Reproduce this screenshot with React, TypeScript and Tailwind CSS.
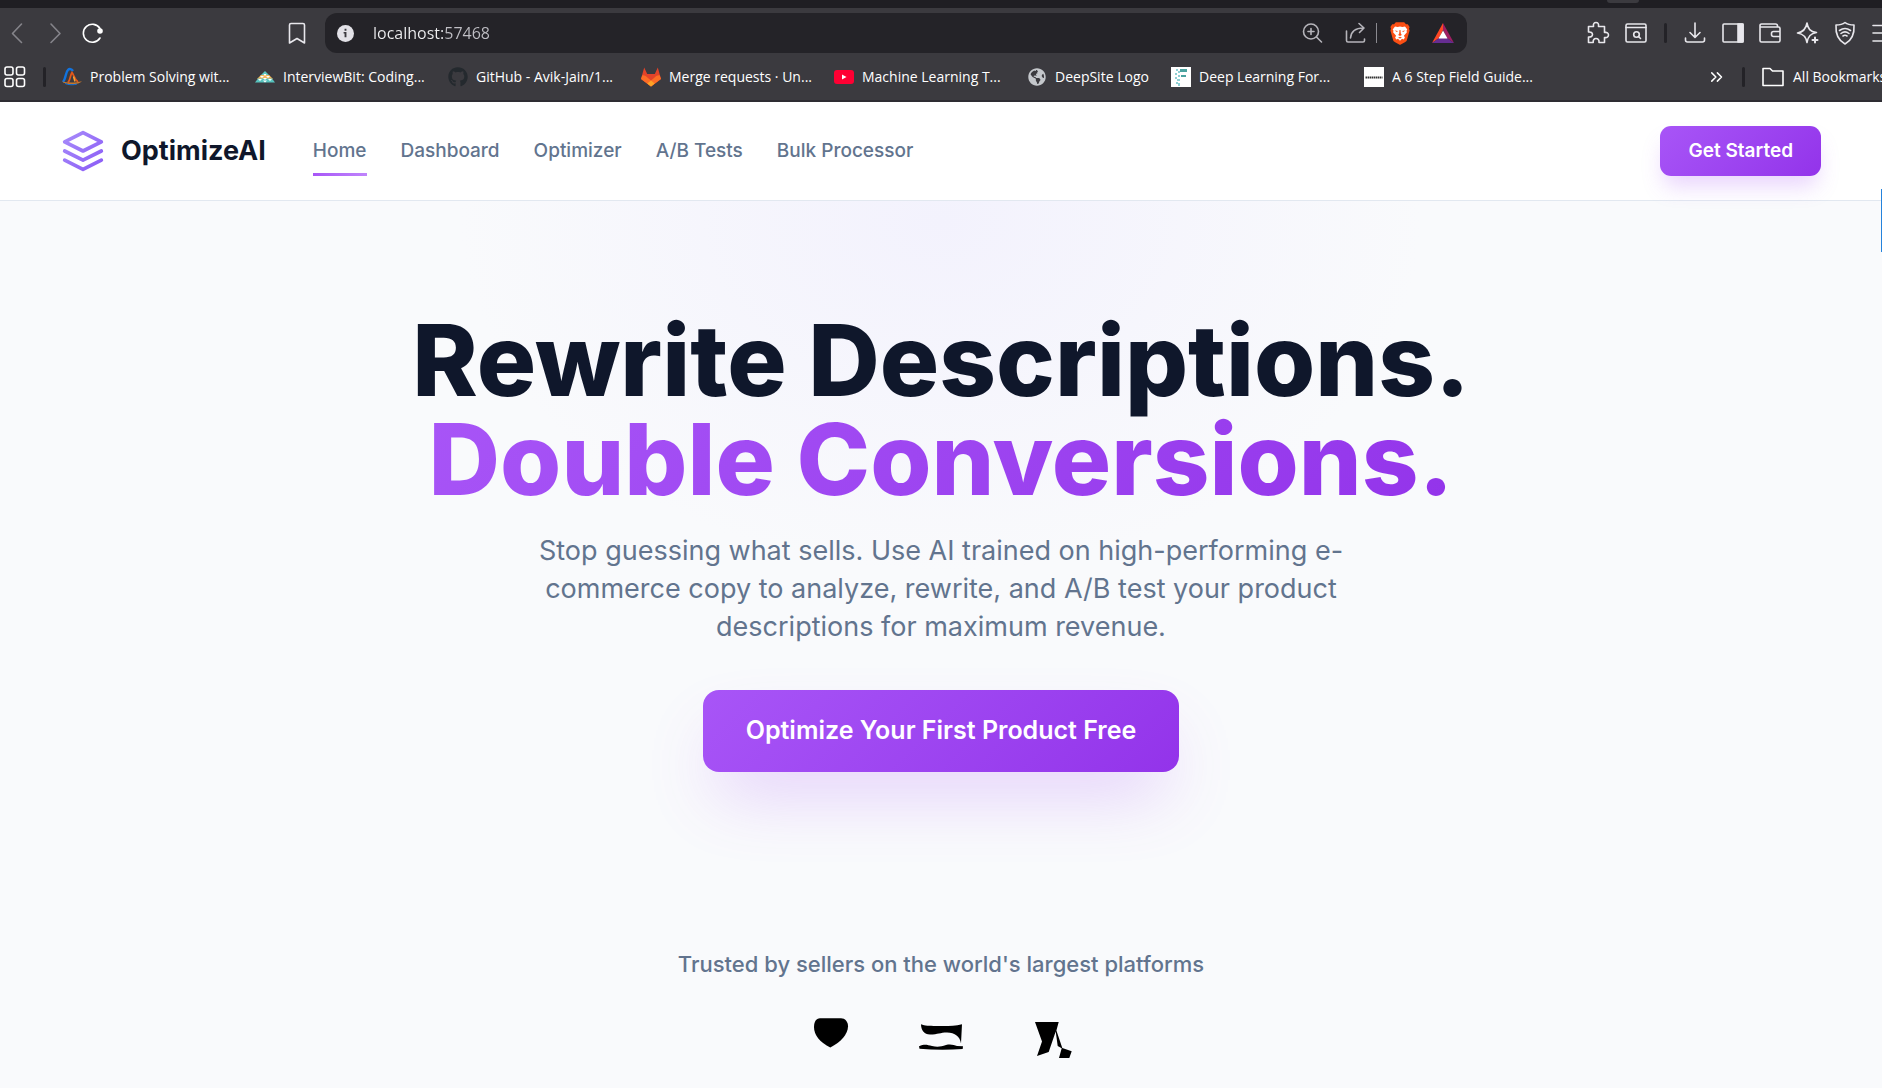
import type { ReactNode } from "react";
import { FaGithub, FaGlobeAmericas } from "react-icons/fa";

function Icon({ children, className = "size-6" }: { children: ReactNode; className?: string }) {
  return (
    <svg
      viewBox="0 0 24 24"
      className={`shrink-0 ${className}`}
      fill="none"
      stroke="currentColor"
      strokeWidth="1.6"
      strokeLinecap="round"
      strokeLinejoin="round"
      aria-hidden="true"
    >
      {children}
    </svg>
  );
}

function ToolButton({ label, children }: { label: string; children: ReactNode }) {
  return (
    <button type="button" aria-label={label} className="shrink-0">
      {children}
    </button>
  );
}

function Separator() {
  return <span className="mx-4 h-5 w-[3px] shrink-0 rounded-full bg-[#232227]" />;
}

const bookmarks = [
  {
    title: "Problem Solving wit...",
    width: "w-[193px]",
    icon: (
      <svg viewBox="0 0 20 20" className="size-5 shrink-0" fill="none">
        <path d="M1 15C4 12 3.500 5 6 2.800 7.500 1.500 9.500 2 11 4" stroke="#1273de" strokeWidth="2.400" />
        <path d="M6 15.500C8.500 13 8 8.500 10 5.500c2 2.500 2.500 7 6 9.500" stroke="#e2571b" strokeWidth="1.800" />
        <path d="M11.500 9.500l1.500 5" stroke="#f3a53a" strokeWidth="1.500" />
        <path d="M0 14.500c6 1.500 14 1.300 20-.3-2 2-5 2.800-10 2.800s-8-.5-10-2.500z" fill="#c7772b" />
        <path d="M3 16.500c3 1.500 9 1.700 12 .5" stroke="#1273de" />
      </svg>
    ),
  },
  {
    title: "InterviewBit: Coding...",
    width: "w-[193px]",
    icon: (
      <svg viewBox="0 0 20 20" className="size-5 shrink-0">
        <path d="M10 4l5 5H5z" fill="#5cc5c0" />
        <path d="M6 8h8l4 4H2z" fill="#f5b75c" />
        <path d="M3 11.500h14l3 4H0z" fill="#58c4bf" />
        <path
          d="M8.500 7l1.500 2 1.500-2zM5 9l2 2 2-2zM11 9l2 2 2-2zM8 11l2 2 2-2zM3 12l2 2 2-2zM8 13.500l2 2 2-2zM13 12l2 2 2-2z"
          fill="#fff"
        />
      </svg>
    ),
  },
  {
    title: "GitHub - Avik-Jain/1...",
    width: "w-[193px]",
    icon: <FaGithub className="size-5 shrink-0 text-[#24292e]" />,
  },
  {
    title: "Merge requests · Un...",
    width: "w-[193px]",
    icon: (
      <svg viewBox="0 0 20 20" className="size-5 shrink-0">
        <path d="M10 19.500L0 12 3.200.5 6.200 7h7.600l3-6.500L20 12z" fill="#e24329" />
        <path d="M10 19.500L0 12l1.200-3.500C3 7.800 5.500 9.500 7 11l3 2.500 3-2.500c1.500-1.500 4-3.200 5.800-2.500L20 12z" fill="#fc6d26" />
        <path d="M10 19.500L6.300 16.500 10 13.600l3.700 2.900z" fill="#fca326" />
      </svg>
    ),
  },
  {
    title: "Machine Learning T...",
    width: "w-[193px]",
    icon: (
      <svg viewBox="0 0 20 20" className="size-5 shrink-0">
        <rect y="3" width="20" height="14" rx="3" fill="#ff0033" />
        <path d="M8 7.500v5l4.500-2.500z" fill="#fff" />
      </svg>
    ),
  },
  {
    title: "DeepSite Logo",
    width: "w-[144px]",
    icon: <FaGlobeAmericas className="size-5 shrink-0 p-px text-[#c4c7cb]" />,
  },
  {
    title: "Deep Learning For...",
    width: "w-[193px]",
    icon: (
      <svg viewBox="0 0 20 20" className="size-5 shrink-0">
        <path d="M0 0h20v20H0z" fill="#fff" />
        <path d="M9 2h7v3H9zM10 8h5v2h-5z" fill="#4ba3a0" />
        <path d="M5 2h2v2H5zM7 4h2v2H7zM4 6h2v2H4zM7 8h2v2H7zM4 10h2v2H4zM6 12h3v2H6zM5 15h2v2H5zM7 16h2v3H7z" fill="#8fd0d4" />
      </svg>
    ),
  },
  {
    title: "A 6 Step Field Guide...",
    width: "w-[193px]",
    icon: (
      <svg viewBox="0 0 20 20" className="size-5 shrink-0">
        <path d="M0 0h20v20H0z" fill="#fff" />
        <path d="M1.500 10.500h17" stroke="#333" strokeWidth="2" strokeDasharray="1.500 .5" />
      </svg>
    ),
  },
];

function AddressBar() {
  return (
    <div className="flex h-10 min-w-0 flex-1 items-center rounded-xl bg-[#242328] px-3">
      <svg viewBox="0 0 18 18" className="size-[17px] shrink-0" aria-hidden="true">
        <circle cx="9" cy="9" r="9" fill="#e3e2e8" />
        <path d="M8 4h2v2H8zM7 7.500h3V13H8V9H7z" fill="#3b3a3f" />
      </svg>
      <input
        aria-label="Address"
        defaultValue="localhost:57468"
        className="ml-[19px] min-w-0 flex-1 bg-[linear-gradient(to_right,#f0f0f2_70px,#c0bfc5_70px)] bg-clip-text text-base text-transparent outline-none"
      />
      <div className="flex items-center text-[#b5b4ba]">
        <ToolButton label="Zoom">
          <Icon>
            <circle cx="11" cy="10.500" r="7.500" />
            <path d="M16.500 16l5 5M11 7.500v6M8 10.500h6" />
          </Icon>
        </ToolButton>
        <span className="w-5" />
        <ToolButton label="Share">
          <Icon>
            <path d="M2.500 10v9.500a1.500 1.500 0 001.500 1.500h15a1.500 1.500 0 001.500-1.500V18" />
            <path d="M6.500 17c.5-6 4-10 13-10M15 2.500L20 7l-4.500 4.500" />
          </Icon>
        </ToolButton>
        <span className="mx-2 h-5 w-px bg-[#8b8a90]" />
      </div>
      <div className="flex items-center gap-5 pl-1">
        <ToolButton label="Brave Shields">
          <svg viewBox="0 0 20 23" className="h-[23px] w-[22px]">
            <path
              d="M5.800.3h8.400l1.800 2h1.800L19.600 5l-.6 1.800.6 1.700-2.700 9.500c-.3 1-.8 1.500-1.600 2L10.800 22.500c-.6.400-1 .4-1.600 0L4.700 20c-.8-.5-1.300-1-1.600-2L.4 8.500 1 6.800.4 5l1.800-2.700H4z"
              fill="#fb4f14"
            />
            <path
              d="M5 4.500l2.700.5 2.300-.5 2.300.5 2.700-.5 2.300 3-.8 1.300.4 1.400-3 3.600 1 1.700-1.200 2-1.700-.8L10 18.800l-2-2.100-1.700.8-1.200-2 1-1.700-3-3.600.4-1.400L2.700 7.500z"
              fill="#fff"
            />
            <path d="M4.500 8.500l3.300.4L7 10zM15.500 8.500l-3.300.4.8 1.100zM9.500 8h1l.3 3.500 1 1.500-1.800 1-1.800-1 1-1.500zM8 15.700l2-.9 2 .9-2 .8z" fill="#fb4f14" />
          </svg>
        </ToolButton>
        <ToolButton label="Brave Rewards">
          <svg viewBox="0 0 24 22" className="h-[22px] w-6">
            <path d="M12 1L1 21l7-5 4-8z" fill="#ff4724" />
            <path d="M12 1l11 20-7-5-4-8z" fill="#9e1f63" />
            <path d="M1 21h22l-7-5H8z" fill="#662d91" />
            <path d="M12 8.500l4.500 8h-9z" fill="#fff" />
          </svg>
        </ToolButton>
      </div>
    </div>
  );
}

function BrowserChrome() {
  return (
    <div className="overflow-hidden border-b-2 border-[#2e2d33] bg-[#3b3a3f] font-['Open_Sans',sans-serif] text-[#e8e7ec]">
      <div className="flex h-2 justify-end bg-[#1f1e23] pr-[243px]">
        <span className="h-[3px] w-8 rounded-b bg-[#3b3a3f]" />
      </div>
      <div className="flex h-[50px] items-center">
        <div className="flex w-[325px] shrink-0 items-center gap-[14px] pr-4 pl-1">
          <ToolButton label="Back">
            <Icon className="size-6 text-[#85848a]">
              <path d="M17.500 3l-9 9.500 9 9" />
            </Icon>
          </ToolButton>
          <ToolButton label="Forward">
            <Icon className="size-6 text-[#85848a]">
              <path d="M9 3l9 9.500-9 9" />
            </Icon>
          </ToolButton>
          <ToolButton label="Reload">
            <Icon className="size-6 text-white">
              <path d="M20 7.500A9 9 0 1 0 20 17" />
              <circle cx="20" cy="10" r="2" fill="currentColor" />
            </Icon>
          </ToolButton>
          <span className="flex-1" />
          <ToolButton label="Bookmark this page">
            <Icon>
              <path d="M4.500 22V4a1.500 1.500 0 011.500-1.500h12A1.500 1.500 0 0119.500 4v18L12 17.500z" />
            </Icon>
          </ToolButton>
        </div>
        <AddressBar />
        <div className="flex w-[415px] shrink-0 items-center pl-[119px]">
          <ToolButton label="Extensions">
            <Icon>
              <path d="M2.500 5.500h5c-.5-3 .8-4 2.500-4s3 1 2.500 4h6v6c2.500-.5 4 .8 4 2.500s-1.500 3-4 2.500v5H13c.3-2.500-1-4-3-4s-3 1.500-2.800 4H2.500v-5.500c2.500.2 4-.8 4-2.500s-1.500-2.800-4-2.500z" />
            </Icon>
          </ToolButton>
          <span className="w-[14px] shrink-0" />
          <ToolButton label="Search tabs">
            <Icon>
              <rect x="2" y="3" width="20" height="18" rx="1.500" />
              <path d="M2 6.500h20M14.500 15.500l2 2" />
              <circle cx="12.500" cy="13.500" r="2.800" />
            </Icon>
          </ToolButton>
          <Separator />
          <div className="flex w-[212px] shrink-0 justify-between">
            <ToolButton label="Downloads">
              <Icon>
                <path d="M12 2v14M7 11.500l5 5 5-5M2.500 17v2a2 2 0 002 2h15a2 2 0 002-2v-2" />
              </Icon>
            </ToolButton>
            <ToolButton label="Sidebar">
              <Icon>
                <rect x="2" y="3" width="20" height="18" rx="1" />
                <path d="M17 3h5v18h-5z" fill="currentColor" />
              </Icon>
            </ToolButton>
            <ToolButton label="Wallet">
              <Icon>
                <path d="M19.500 6V5A2 2 0 0017.500 3H3.500A1.500 1.500 0 002 4.500V19.500A1.500 1.500 0 003.500 21h17a1.500 1.500 0 001.500-1.500v-12A1.500 1.500 0 0020.500 6H2.500M22 10.500h-6.500a2 2 0 00-2 2v1a2 2 0 002 2H22" />
              </Icon>
            </ToolButton>
            <ToolButton label="Leo AI">
              <Icon>
                <path d="M11 2c1 6 3 8.500 9.500 9.500-3 .6-5 1.500-6.500 3-1.400 1.400-2.300 3.500-3 7C10 15.500 7.500 13 1.500 12 7.500 11 10 8 11 2z" />
                <path d="M19 16.500v5M16.500 19h5" strokeWidth="2" />
              </Icon>
            </ToolButton>
            <ToolButton label="VPN">
              <Icon>
                <path d="M12 1.500c2.500 2 5.500 2.500 9 2.500.6 9-1.500 15-9 19C4.500 19 2.400 13 3 4c3.500 0 6.500-.5 9-2.500z" />
                <path d="M6.500 9.500c3.500-2.500 7.500-2.500 11 0M8 12.500c2.500-2 5.500-2 8 0M10 15c1.300-.9 2.700-.9 4 0" />
              </Icon>
            </ToolButton>
            <ToolButton label="Menu">
              <Icon>
                <path d="M2 4.500h20M2 12h20M2 20h20" />
              </Icon>
            </ToolButton>
          </div>
        </div>
      </div>
      <div className="flex h-[42px] items-center pb-1 text-sm text-white">
        <ToolButton label="Apps">
          <Icon className="ml-[3px] size-6">
            <rect x="2" y="2" width="8" height="8" rx="2" />
            <rect x="13.500" y="2" width="8" height="8" rx="2" />
            <rect x="2" y="13.500" width="8" height="8" rx="2" />
            <rect x="13.500" y="13.500" width="8" height="8" rx="2" />
          </Icon>
        </ToolButton>
        <Separator />
        <nav aria-label="Bookmarks" className="flex min-w-0 flex-1">
          {bookmarks.map((bookmark) => (
            <a key={bookmark.title} href="#" className={`flex shrink-0 items-center gap-2 whitespace-nowrap ${bookmark.width}`}>
              {bookmark.icon}
              {bookmark.title}
            </a>
          ))}
        </nav>
        <div className="flex w-[174px] shrink-0 items-center whitespace-nowrap">
          <ToolButton label="More bookmarks">
            <Icon className="size-[18px]">
              <path d="M5 6.500l5.500 5.500L5 17.500M12.500 6.500L18 12l-5.500 5.500" strokeWidth="2" />
            </Icon>
          </ToolButton>
          <Separator />
          <button type="button" className="flex shrink-0 items-center gap-2">
            <Icon>
              <path d="M2 20.500v-17h7l2.500 2.500H22v14.500z" />
            </Icon>
            All Bookmarks
          </button>
        </div>
      </div>
    </div>
  );
}

const navLinks = ["Home", "Dashboard", "Optimizer", "A/B Tests", "Bulk Processor"];

function SiteHeader() {
  return (
    <header className="relative z-10 border-b border-slate-200 bg-white">
      <div className="mx-auto flex h-[98px] max-w-[1760px] items-center">
        <a href="#" className="flex items-center gap-4 text-[27px] font-bold text-slate-900">
          <svg
            viewBox="0 0 24 24"
            className="size-11"
            fill="none"
            stroke="url(#logo)"
            strokeWidth="2"
            strokeLinecap="round"
            strokeLinejoin="round"
          >
            <defs>
              <linearGradient id="logo" gradientUnits="userSpaceOnUse" x1="2" y1="2" x2="22" y2="22">
                <stop stopColor="#a78bfa" />
                <stop offset="1" stopColor="#8b5cf6" />
              </linearGradient>
            </defs>
            <path d="M12 2L2 7l10 5 10-5-10-5zM2 17l10 5 10-5M2 12l10 5 10-5" />
          </svg>
          OptimizeAI
        </a>
        <nav aria-label="Main" className="ml-[47px] flex gap-[34px] text-[19px] font-medium text-slate-500">
          {navLinks.map((link, index) => (
            <a key={link} href="#" className="relative leading-7">
              {link}
              {index === 0 ? (
                <span className="absolute inset-x-0 -bottom-[11px] h-[3px] bg-linear-to-r from-[#a855f7] to-[#c084fc]" />
              ) : null}
            </a>
          ))}
        </nav>
        <button
          type="button"
          className="ml-auto h-[50px] rounded-[11px] bg-linear-135 from-[#a855f7] to-[#9333ea] px-7 text-[19px] font-semibold text-white shadow-[0_14px_21px_-4px_rgba(168,85,247,0.25)]"
        >
          Get Started
        </button>
      </div>
    </header>
  );
}

function Hero() {
  return (
    <section className="bg-[radial-gradient(480px_350px_at_50%_20px,#f3f2fd,#f9fafc)] pt-[110px] text-center">
      <h1 className="text-[99px] leading-[99px] font-extrabold text-slate-900">
        Rewrite Descriptions.
        <br />
        <span className="bg-linear-135 from-[#a855f7] to-[#9333ea] bg-clip-text text-transparent">Double Conversions.</span>
      </h1>
      <p className="mx-auto mt-[23px] max-w-[880px] text-[27px] leading-[38px] text-slate-500">
        Stop guessing what sells. Use AI trained on high-performing e-commerce copy to analyze, rewrite, and A/B test your
        product descriptions for maximum revenue.
      </p>
      <button
        type="button"
        className="mt-11 h-[82px] rounded-2xl bg-linear-135 from-[#a855f7] to-[#9333ea] px-[43px] text-[25px] font-semibold text-white shadow-[0_34px_69px_-16px_rgba(168,85,247,0.3)]"
      >
        Optimize Your First Product Free
      </button>
    </section>
  );
}

function TrustedBy() {
  return (
    <section className="pt-[176px] pb-8 text-center">
      <h2 className="text-[22px] leading-[33px] font-medium text-slate-500">Trusted by sellers on the world's largest platforms</h2>
      <div className="mt-[33px] flex justify-center gap-[66px] text-black">
        <svg viewBox="0 0 44 44" className="size-11" fill="currentColor">
          <path d="M11 4.300h21c4 0 7 3.500 7 8C39 20 32 28 21.300 33.600 11 28.500 5 21 5 13c0-5 2-8.700 6-8.700z" />
        </svg>
        <svg viewBox="0 0 44 44" className="size-11" fill="currentColor">
          <path d="M2 10.300c4 1.700 8 1.500 15 1.700 11 0 18 .3 26-1.700L42 29.500c-1-7-6-11-14-11-7 0-9 2-17 2C5 20.500 2 16 2 10.300z" />
          <path d="M0 32.300c6-2.500 8-1.300 13-.2 6 1.200 9 .5 14-1.100 5-1.200 8 .2 11 .9l6 .3-.3 2.800C30 36 15 36 .5 34.800z" />
        </svg>
        <svg viewBox="0 0 44 44" className="size-11" fill="currentColor">
          <path d="M6 8h23.700l-2.300 8.500L33.300 34l9.400 3.300L40.300 44H30l2.700-9.800-4-2.200-2-14.500-7 20.500L8 42l5-14.500z" />
        </svg>
      </div>
    </section>
  );
}

export default function App() {
  return (
    <div className="relative min-h-screen overflow-hidden bg-[#f9fafc] font-['Inter',sans-serif]">
      <BrowserChrome />
      <SiteHeader />
      <main>
        <Hero />
        <TrustedBy />
      </main>
      <span className="absolute top-[189px] right-0 z-20 h-[63px] w-px bg-[#2583dc]" />
    </div>
  );
}
